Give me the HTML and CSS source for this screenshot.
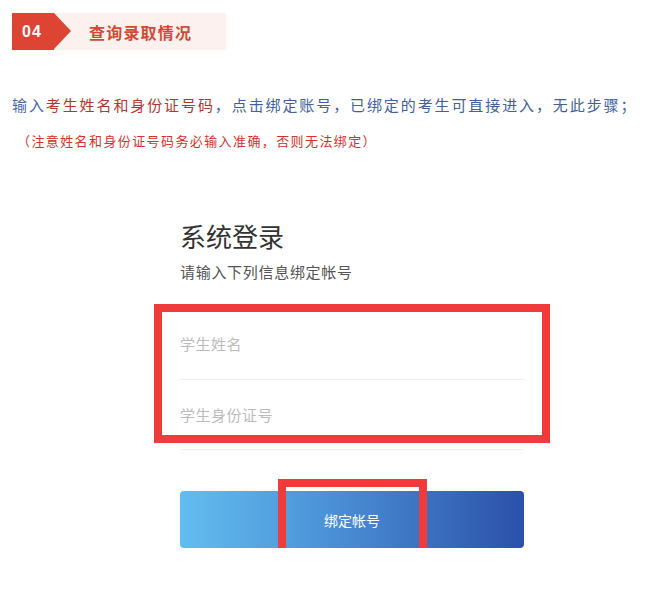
FILE: index.html
```html
<!DOCTYPE html>
<html lang="zh-CN">
<head>
    <meta charset="UTF-8">
    <meta name="viewport" content="width=device-width, initial-scale=1.0">
    <title>查询录取情况</title>
    <link rel="stylesheet" href="styles.css">
</head>
<body>
    <div class="step">
        <div class="step-num">04</div>
        <div class="step-title">查询录取情况</div>
    </div>

    <p class="tip"><span class="tip-blue">输入</span><span class="tip-red">考生姓名和身份证号码</span>，点击绑定账号，已绑定的考生可直接进入，无此步骤；</p>
    <p class="note">（注意姓名和身份证号码务必输入准确，否则无法绑定）</p>

    <div class="login">
        <h1 class="login-title">系统登录</h1>
        <div class="login-sub">请输入下列信息绑定帐号</div>

        <div class="fields">
            <div class="field">学生姓名</div>
            <div class="field">学生身份证号</div>
            <div class="mark mark-fields"></div>
        </div>

        <div class="btn-wrap">
            <button class="btn">绑定帐号</button>
            <div class="mark mark-btn"></div>
        </div>
    </div>
</body>
</html>
```

FILE: styles.css
```css
body {
    margin: 0;
    background: #fff;
    font-family: "Noto Sans CJK SC", "Noto Sans", sans-serif;
    overflow: hidden;
}

/* step header */
.step {
    display: flex;
    align-items: center;
    margin: 13px 0 0 12px;
    width: 214px;
    height: 37px;
    background: #fdf1ef;
}

.step-num {
    position: relative;
    width: 42px;
    height: 37px;
    line-height: 37px;
    background: #dd4433;
    color: #fff;
    font-family: "Liberation Sans", sans-serif;
    font-weight: bold;
    font-size: 16px;
    letter-spacing: 1px;
    text-indent: 10px;
}

.step-num::after {
    content: "";
    position: absolute;
    left: 42px;
    top: 0;
    border-top: 18.5px solid transparent;
    border-bottom: 18.5px solid transparent;
    border-left: 17px solid #dd4433;
}

.step-title {
    margin-left: 35px;
    color: #d24a33;
    font-size: 16px;
    font-weight: bold;
    letter-spacing: 1.2px;
}

/* instructions */
.tip {
    margin: 43px 0 0 12px;
    font-size: 15px;
    line-height: 24px;
    letter-spacing: 1.9px;
    color: #41609e;
    white-space: nowrap;
}

.tip-blue {
    color: #4a68a8;
}

.tip-red {
    color: #b5352e;
}

.note {
    margin: 14px 0 0 17px;
    font-size: 13px;
    line-height: 20px;
    letter-spacing: 1.4px;
    color: #d8302a;
}

/* login form */
.login {
    width: 344px;
    margin: 67px 0 0 180px;
}

.login-title {
    margin: 0;
    font-size: 26px;
    font-weight: normal;
    line-height: 36px;
    color: #333;
}

.login-sub {
    margin-top: 7px;
    font-size: 15px;
    line-height: 22px;
    letter-spacing: 0.7px;
    color: #555;
}

.fields {
    position: relative;
    margin-top: 26px;
}

.field {
    height: 70px;
    line-height: 70px;
    border-bottom: 1px solid #f0f0f0;
    font-size: 15px;
    letter-spacing: 0.5px;
    color: #bbb;
}

.field + .field {
    height: 69px;
}

.btn-wrap {
    position: relative;
    margin-top: 41px;
}

.btn {
    display: block;
    width: 100%;
    height: 57px;
    border: none;
    border-radius: 4px;
    background: linear-gradient(to right, #62bdef, #4a8fd6 45%, #2b50a8);
    color: #fff;
    font-family: inherit;
    font-size: 14px;
}

/* red highlight frames */
.mark {
    position: absolute;
    border: 8px solid #ef3b3b;
    box-sizing: border-box;
}

.mark-fields {
    left: -26px;
    top: -5px;
    width: 396px;
    height: 139px;
}

.mark-btn {
    left: 98px;
    top: -12px;
    width: 149px;
    height: 79px;
}
```
